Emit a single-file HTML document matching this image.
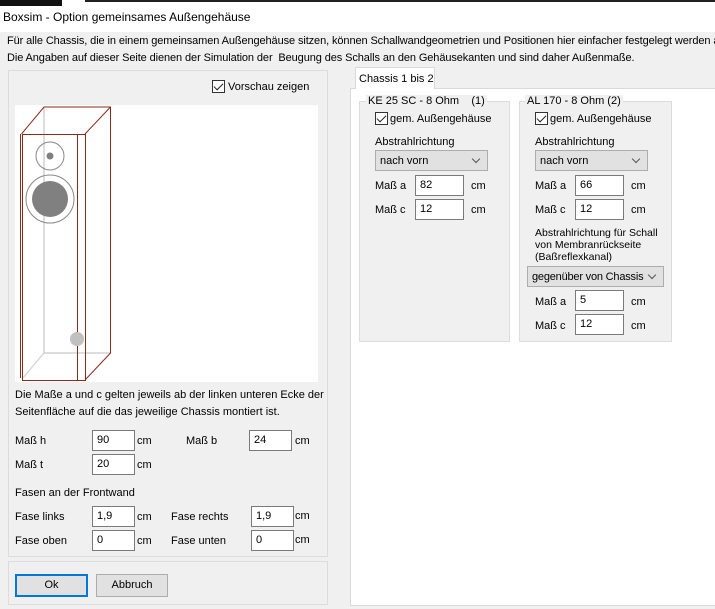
<!DOCTYPE html>
<html><head><meta charset="utf-8"><style>
*{box-sizing:border-box}
body{margin:0;width:715px;height:609px;overflow:hidden;background:#f0f0f0;font-family:"Liberation Sans",sans-serif;font-size:11px;color:#000;position:relative}
.a{position:absolute;white-space:nowrap}
.in{position:absolute;background:#fff;border:1px solid #7a7a7a;height:21px;padding:3px 4px;font-size:11px}
.cb{position:absolute;width:13px;height:13px;border:1px solid #333;background:#fff}
.cb:after{content:"";position:absolute;left:3px;top:0px;width:4px;height:8px;border:solid #222;border-width:0 1.5px 1.5px 0;transform:rotate(45deg)}
.dd{position:absolute;background:#e1e1e1;border:1px solid #adadad;height:21px;padding:4px 4px}
.dd:after{content:"";position:absolute;right:8px;top:5px;width:5px;height:5px;border:solid #555;border-width:0 1px 1px 0;transform:rotate(45deg)}
.grp{position:absolute;border:1px solid #dcdcdc;background:#f0f0f0}
</style></head><body>
<div class="a" style="left:0;top:0;width:715px;height:6px;background:#fff"></div>
<div class="a" style="left:0;top:0;width:62px;height:6px;background:#111"></div>
<div class="a" style="left:85px;top:0;width:630px;height:2px;background:#222"></div>
<div class="a" style="left:0;top:6px;width:715px;height:26px;background:#fff"></div>
<div class="a" style="left:3px;top:10px;font-size:12px">Boxsim - Option gemeinsames Außengehäuse</div>
<div class="a" style="left:7px;top:35px;letter-spacing:-0.1px">Für alle Chassis, die in einem gemeinsamen Außengehäuse sitzen, können Schallwandgeometrien und Positionen hier einfacher festgelegt werden als</div>
<div class="a" style="left:7px;top:52px;letter-spacing:-0.1px">Die Angaben auf dieser Seite dienen der Simulation der&nbsp; Beugung des Schalls an den Gehäusekanten und sind daher Außenmaße.</div>

<div class="a" style="left:8px;top:70px;width:320px;height:487px;border:1px solid #dcdcdc"></div>
<div class="cb" style="left:212px;top:80px"></div>
<div class="a" style="left:228px;top:81px">Vorschau zeigen</div>
<div class="a" style="left:15px;top:105px;width:303px;height:277px;background:#fff"></div>
<svg class="a" style="left:0;top:0" width="330" height="400">
<g fill="none" stroke-width="1">
<line x1="44" y1="107" x2="44" y2="353" stroke="#bbb"/>
<line x1="44" y1="353" x2="110" y2="353" stroke="#bbb"/>
<line x1="44" y1="353" x2="22" y2="379" stroke="#ccc"/>
<path d="M21.5 134 L44 107 H110.5 V353 L85 380 M85 134 L110.5 107" stroke="#8b2a1a"/>
<rect x="22.5" y="134.5" width="55" height="246" stroke="#8b2a1a"/>
<rect x="77.5" y="134.5" width="8" height="246" stroke="#8b2a1a"/>
<line x1="20.5" y1="134" x2="20.5" y2="378" stroke="#8b2a1a"/>
<circle cx="50" cy="156" r="14" stroke="#888"/>
<circle cx="50" cy="199" r="24" stroke="#888"/>
</g>
<circle cx="50" cy="156" r="3.5" fill="#808080"/>
<circle cx="50" cy="199" r="18" fill="#808080"/>
<circle cx="77" cy="339" r="7" fill="#c0c0c0"/>
</svg>
<div class="a" style="left:15px;top:389px">Die Maße a und c gelten jeweils ab der linken unteren Ecke der</div>
<div class="a" style="left:15px;top:406px">Seitenfläche auf die das jeweilige Chassis montiert ist.</div>
<div class="a" style="left:15px;top:435px">Maß h</div><div class="in" style="left:92px;top:430px;width:43px">90</div><div class="a" style="left:137px;top:435px">cm</div>
<div class="a" style="left:186px;top:435px">Maß b</div><div class="in" style="left:249px;top:430px;width:43px">24</div><div class="a" style="left:295px;top:435px">cm</div>
<div class="a" style="left:15px;top:459px">Maß t</div><div class="in" style="left:92px;top:454px;width:43px">20</div><div class="a" style="left:137px;top:459px">cm</div>
<div class="a" style="left:15px;top:487px">Fasen an der Frontwand</div>
<div class="a" style="left:15px;top:511px">Fase links</div><div class="in" style="left:92px;top:506px;width:43px">1,9</div><div class="a" style="left:137px;top:511px">cm</div>
<div class="a" style="left:171px;top:511px">Fase rechts</div><div class="in" style="left:251px;top:506px;width:43px">1,9</div><div class="a" style="left:295px;top:510px">cm</div>
<div class="a" style="left:15px;top:535px">Fase oben</div><div class="in" style="left:92px;top:530px;width:43px">0</div><div class="a" style="left:137px;top:535px">cm</div>
<div class="a" style="left:171px;top:535px">Fase unten</div><div class="in" style="left:251px;top:530px;width:43px">0</div><div class="a" style="left:295px;top:534px">cm</div>

<div class="a" style="left:8px;top:561px;width:320px;height:44px;border:1px solid #dcdcdc"></div>
<div class="a" style="left:15px;top:574px;width:73px;height:23px;background:#e1e1e1;border:2px solid #0078d7;text-align:center;line-height:19px">Ok</div>
<div class="a" style="left:96px;top:574px;width:72px;height:23px;background:#e1e1e1;border:1px solid #adadad;text-align:center;line-height:21px">Abbruch</div>

<div class="a" style="left:350px;top:88px;width:365px;height:518px;background:#fff;border:1px solid #d9d9d9;border-right:none"></div>
<div class="a" style="left:355px;top:67px;width:80px;height:22px;background:#fff;border:1px solid #d9d9d9;border-bottom:none;padding:5px 0 0 3px">Chassis 1 bis 2</div>

<div class="grp" style="left:359px;top:101px;width:151px;height:241px"></div>
<div class="a" style="left:366px;top:95px;background:#f0f0f0;padding:0 2px">KE 25 SC - 8 Ohm&nbsp;&nbsp;&nbsp; (1)</div>
<div class="cb" style="left:375px;top:112px"></div><div class="a" style="left:390px;top:113px">gem. Außengehäuse</div>
<div class="a" style="left:375px;top:136px">Abstrahlrichtung</div>
<div class="dd" style="left:375px;top:150px;width:113px">nach vorn</div>
<div class="a" style="left:375px;top:180px">Maß a</div><div class="in" style="left:415px;top:175px;width:49px">82</div><div class="a" style="left:471px;top:180px">cm</div>
<div class="a" style="left:375px;top:204px">Maß c</div><div class="in" style="left:415px;top:199px;width:49px">12</div><div class="a" style="left:471px;top:204px">cm</div>

<div class="grp" style="left:519px;top:101px;width:153px;height:241px"></div>
<div class="a" style="left:525px;top:95px;background:#f0f0f0;padding:0 2px">AL 170 - 8 Ohm (2)</div>
<div class="cb" style="left:535px;top:112px"></div><div class="a" style="left:550px;top:113px">gem. Außengehäuse</div>
<div class="a" style="left:535px;top:136px">Abstrahlrichtung</div>
<div class="dd" style="left:535px;top:150px;width:113px">nach vorn</div>
<div class="a" style="left:535px;top:180px">Maß a</div><div class="in" style="left:575px;top:175px;width:49px">66</div><div class="a" style="left:631px;top:180px">cm</div>
<div class="a" style="left:535px;top:204px">Maß c</div><div class="in" style="left:575px;top:199px;width:49px">12</div><div class="a" style="left:631px;top:204px">cm</div>
<div class="a" style="left:535px;top:227px;line-height:12px;font-size:10.5px">Abstrahlrichtung für Schall<br>von Membranrückseite<br>(Baßreflexkanal)</div>
<div class="dd" style="left:527px;top:266px;width:137px;padding-left:4px;letter-spacing:-0.2px">gegenüber von Chassis</div>
<div class="a" style="left:535px;top:296px">Maß a</div><div class="in" style="left:575px;top:290px;width:49px">5</div><div class="a" style="left:631px;top:296px">cm</div>
<div class="a" style="left:535px;top:320px">Maß c</div><div class="in" style="left:575px;top:314px;width:49px">12</div><div class="a" style="left:631px;top:320px">cm</div>
</body></html>
